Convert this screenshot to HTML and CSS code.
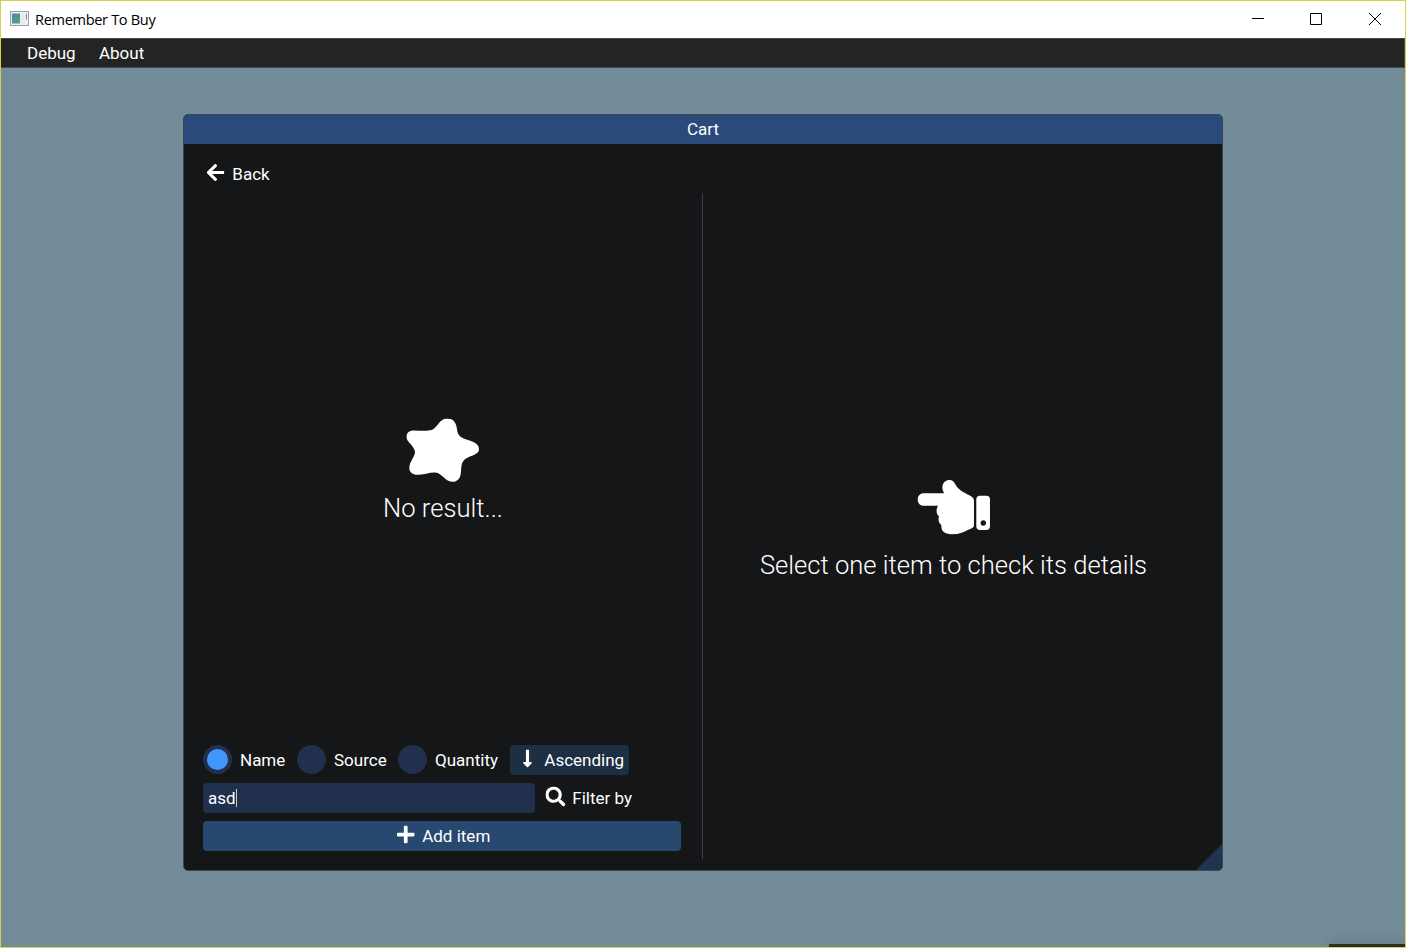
FILE: index.html
```html
<!DOCTYPE html>
<html lang="en">
<head>
<meta charset="utf-8">
<title>Remember To Buy</title>
<link rel="stylesheet" href="styles.css">
</head>
<body>
<div class="app">
  <header class="titlebar">
    <svg class="app-icon" viewBox="0 0 19 15">
      <defs><linearGradient id="pane" x1="0" y1="0" x2="1" y2="1"><stop offset="0" stop-color="#4b86b0"/><stop offset="1" stop-color="#55a375"/></linearGradient></defs>
      <rect x=".5" y=".5" width="18" height="14" fill="#eef0f1" stroke="#9aa0a6"/>
      <rect x="2" y="2.5" width="8" height="10" fill="url(#pane)"/>
      <rect x="11" y="2.5" width="4" height="10" fill="#e6e9eb"/>
      <rect x="16" y="2.5" width="1" height="6" fill="#5f9f9a"/>
    </svg>
    <span class="app-title">Remember To Buy</span>
    <svg class="controls" viewBox="0 0 132 14" fill="none" stroke="#000">
      <path d="M1 6.5h12M59.5 1.5h11v11h-11z"/>
      <path d="M118 1l12 12M130 1l-12 12"/>
    </svg>
  </header>
  <nav class="menubar"><span class="menu-debug">Debug</span><span class="menu-about">About</span></nav>
  <main class="stage">
    <section class="cart">
      <h1 class="cart-title"><span>Cart</span></h1>
      <div class="back">
        <svg class="icon-back" viewBox="0 0 448 512"><path d="M257.5 445.1l-22.2 22.2c-9.4 9.4-24.6 9.4-33.9 0L7 273c-9.4-9.4-9.4-24.6 0-33.9L201.4 44.7c9.4-9.4 24.6-9.4 33.9 0l22.2 22.2c9.5 9.5 9.3 25-.4 34.3L136.6 216H424c13.3 0 24 10.7 24 24v32c0 13.3-10.7 24-24 24H136.6l120.5 114.8c9.8 9.3 10 24.8.4 34.3z"/></svg>
        <span>Back</span>
      </div>
      <div class="columns">
        <div class="list">
          <div class="empty">
            <svg class="splotch" viewBox="12 12 219 192"><path d="M135 12C151 12 160 22 163 38C165 52 166 61 176 68C186 76 198 76 212 82C224 88 230 94 230 104C230 116 220 120 207 125C190 131 181 139 178 152C176 162 177 170 175 180C172 195 163 202 150 202C138 202 131 196 123 188C114 179 108 174 97 174C80 174 63 181 46 181C31 181 21 174 21 160C21 144 38 126 38 113C38 102 24 89 17 80C7 65 14 48 34 48C52 48 74 51 88 47C101 42 107 28 116 20C122 14 128 12 135 12Z"/></svg>
            <p class="big big-none">No result...</p>
          </div>
          <div class="sort">
            <i class="radio checked"></i><span class="opt-name">Name</span>
            <i class="radio"></i><span class="opt-source">Source</span>
            <i class="radio"></i><span class="opt-quantity">Quantity</span>
            <div class="order">
              <svg class="icon-down" viewBox="0 0 256 512"><path d="M168 345.941V44c0-6.627-5.373-12-12-12h-56c-6.627 0-12 5.373-12 12v301.941H41.941c-21.382 0-32.09 25.851-16.971 40.971l86.059 86.059c9.373 9.373 24.569 9.373 33.941 0l86.059-86.059c15.119-15.119 4.411-40.971-16.971-40.971H168z"/></svg>
              <span>Ascending</span>
            </div>
          </div>
          <div class="filter">
            <div class="field"><span>asd</span><i class="caret"></i></div>
            <svg class="icon-search" viewBox="0 0 512 512"><path d="M505 442.7L405.3 343c-4.5-4.5-10.6-7-17-7H372c27.6-35.3 44-79.7 44-128C416 93.1 322.9 0 208 0S0 93.1 0 208s93.1 208 208 208c48.3 0 92.7-16.4 128-44v16.3c0 6.4 2.5 12.5 7 17l99.7 99.7c9.4 9.4 24.6 9.4 33.9 0l28.3-28.3c9.4-9.4 9.4-24.6.1-34zM208 336c-70.7 0-128-57.2-128-128 0-70.7 57.2-128 128-128 70.7 0 128 57.2 128 128 0 70.7-57.2 128-128 128z"/></svg>
            <span>Filter by</span>
          </div>
          <div class="add">
            <svg class="icon-plus" viewBox="0 0 448 512"><path d="M416 208H272V64c0-17.67-14.33-32-32-32h-32c-17.67 0-32 14.33-32 32v144H32c-17.67 0-32 14.33-32 32v32c0 17.67 14.33 32 32 32h144v144c0 17.67 14.33 32 32 32h32c17.67 0 32-14.33 32-32V304h144c17.67 0 32-14.33 32-32v-32c0-17.67-14.33-32-32-32z"/></svg>
            <span>Add item</span>
          </div>
        </div>
        <div class="details">
          <svg class="hand" viewBox="81 43 219 165"><path fill-rule="evenodd" d="M100 84H162C157 76 155 68 157 60C159 51 167 44 177 44C187 44 192 50 195 57C201 70 215 79 228 85C238 90 251 95 251 106V181C251 187 240 190 231 195C220 201 205 207 188 207C164 207 152 199 153 179C145 173 143 163 146 153C138 147 136 133 143 121H100C89 121 82 113 82 103C82 92 90 84 100 84ZM269 91H288Q299 91 299 102V183Q299 194 288 194H269Q258 194 258 183V102Q258 91 269 91ZM271 173a8 8 0 1 0 16 0a8 8 0 1 0-16 0Z"/></svg>
          <p class="big big-select">Select one item to check its details</p>
        </div>
      </div>
      <i class="grip"></i>
    </section>
  </main>
  <i class="overlay"></i>
</div>
</body>
</html>
```
FILE: styles.css
```css
* { box-sizing: border-box; }
body { margin: 0; }
.app {
  position: relative;
  display: flex;
  flex-direction: column;
  width: 1406px;
  height: 948px;
  overflow: hidden;
  border: 1px solid #dbd148;
  background: #738c99;
  color: #fff;
  font: 17px/30px Roboto, sans-serif;
}
.app svg { flex: none; display: block; fill: #fff; }
.app span { white-space: nowrap; }
.titlebar {
  display: flex;
  align-items: center;
  height: 37px;
  padding: 0 22px 2px 9px;
  background: #fff;
  color: #000;
  font: 14.6px/36px "Open Sans", sans-serif;
}
.app-icon { width: 19px; height: 15px; margin-right: 6px; }
.app-title { padding-top: 1px; letter-spacing: -0.35px; }
.app .controls { width: 132px; height: 14px; margin-left: auto; fill: none; }
.menubar {
  display: flex;
  gap: 23.3px;
  height: 30px;
  padding-left: 26px;
  border: 1px solid #43484d;
  border-left: 0;
  background: #242424;
  line-height: 29px;
}
.stage { padding: 46px 0 0 182px; }
.cart {
  position: relative;
  width: 1040px;
  height: 757px;
  overflow: hidden;
  border: 1px solid #43454c;
  border-radius: 5px;
  background: #151618;
}
.cart-title {
  height: 29px;
  margin: 0;
  background: #294a7a;
  font-size: 17px;
  font-weight: 400;
  line-height: 29px;
  text-align: center;
}
.back {
  display: flex;
  height: 49px;
  padding: 15px 0 0 22px;
}
.icon-back { width: 18px; height: 20px; margin: 4px 8.3px 0 0; transform: translate(0.5px, -0.5px); }
.columns { display: flex; height: 666px; }
.list {
  display: flex;
  flex-direction: column;
  width: 519px;
  padding: 0 21px 8px 19px;
  border-right: 1px solid #3e3e48;
}
.empty {
  display: flex;
  flex: 1;
  flex-direction: column;
  align-items: center;
  padding-top: 225px;
}
.splotch { width: 73px; height: 64px; transform: translate(0.3px, 0.4px); }
.big {
  margin: 9px 0 0;
  font-size: 25.6px;
  font-weight: 300;
  line-height: 34px;
  white-space: nowrap;
}
.big-none { padding-left: 2px; }
.sort { display: flex; height: 30px; margin-bottom: 8px; }
.radio {
  flex: none;
  width: 29px;
  height: 29px;
  margin-right: 8px;
  border-radius: 50%;
  background: #20304d;
}
.radio.checked { border: 4px solid #20304d; background: #4296fa; }
.opt-name { width: 57px; }
.opt-source { width: 64px; }
.opt-quantity { width: 75px; }
.order {
  display: flex;
  width: 119px;
  height: 30px;
  padding-left: 12px;
  border-radius: 4px;
  background: #1d2f43;
}
.icon-down { width: 10px; height: 20px; margin: 4px 12.3px 0 0; transform: translate(0.5px, -0.5px); }
.filter { display: flex; height: 30px; margin-bottom: 8px; }
.field {
  display: flex;
  width: 332px;
  height: 30px;
  padding-left: 5px;
  border-radius: 4px;
  background: #20304d;
}
.caret { width: 1px; height: 18px; margin-top: 6px; background: #c4c8d0; }
.icon-search { width: 20px; height: 20px; margin: 4px 7.3px 0 10px; transform: translate(0.5px, -0.5px); }
.add {
  display: flex;
  width: 478px;
  height: 30px;
  padding-left: 194px;
  border-radius: 4px;
  background: #274970;
}
.icon-plus { width: 17.5px; height: 20px; margin: 4px 7.7px 0 0; transform: translate(0, -0.5px); }
.details {
  display: flex;
  flex: 1;
  flex-direction: column;
  align-items: center;
  padding: 287px 18px 0 0;
}
.hand { width: 73px; height: 55px; transform: translate(0.3px, -0.3px); }
.details .big { margin-top: 13px; }
.grip {
  position: absolute;
  right: 0;
  bottom: 0;
  width: 26px;
  height: 26px;
  background: #20344f;
  clip-path: polygon(100% 0, 100% 100%, 0 100%);
}
.overlay {
  position: absolute;
  right: -1px;
  bottom: -1px;
  width: 77px;
  height: 4px;
  background: #2b2b2b;
  box-shadow: 0 0 12px rgba(0, 0, 0, 0.25);
}
```
